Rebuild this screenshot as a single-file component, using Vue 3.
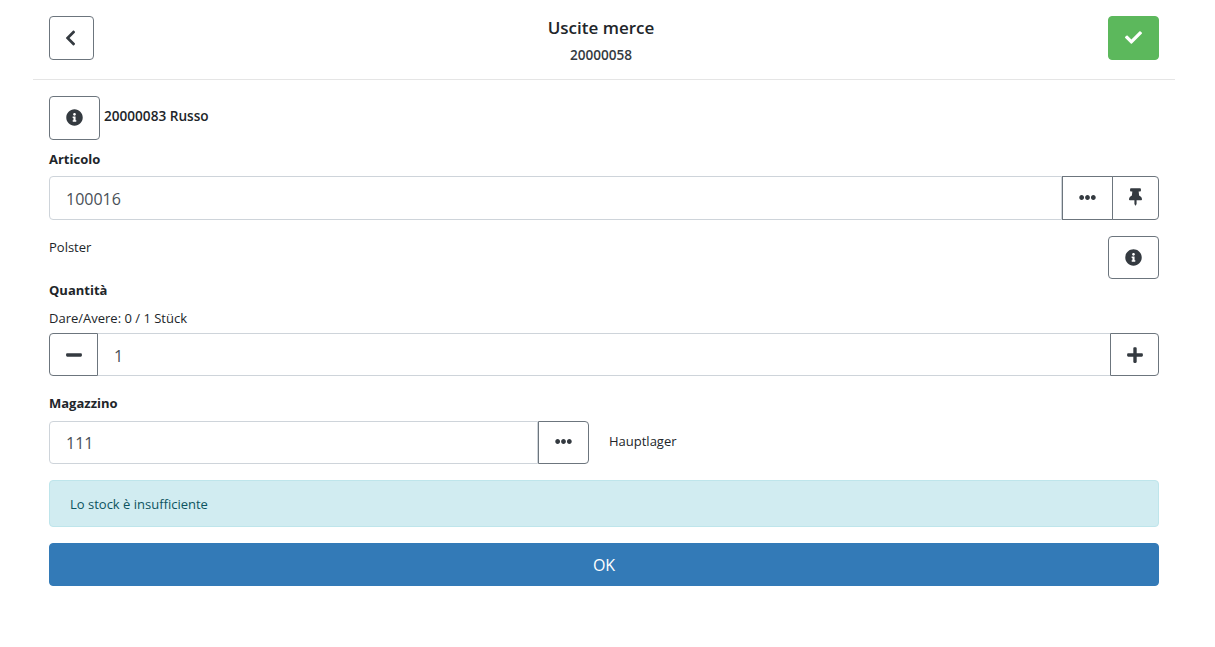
<script setup>
const info = 'M256 8C119.043 8 8 119.083 8 256c0 136.997 111.043 248 248 248s248-111.003 248-248C504 119.083 392.957 8 256 8zm0 110c23.196 0 42 18.804 42 42s-18.804 42-42 42-42-18.804-42-42 18.804-42 42-42zm56 254c0 6.627-5.373 12-12 12h-88c-6.627 0-12-5.373-12-12v-24c0-6.627 5.373-12 12-12h12v-64h-12c-6.627 0-12-5.373-12-12v-24c0-6.627 5.373-12 12-12h64c6.627 0 12 5.373 12 12v100h12c6.627 0 12 5.373 12 12v24z'
const dots = 'M328 256c0 39.8-32.2 72-72 72s-72-32.2-72-72 32.2-72 72-72 72 32.2 72 72zm104-72c-39.8 0-72 32.2-72 72s32.2 72 72 72 72-32.2 72-72-32.2-72-72-72zm-352 0c-39.8 0-72 32.2-72 72s32.2 72 72 72 72-32.2 72-72-32.2-72-72-72z'
</script>

<template>
  <div class="page">
    <header class="head">
      <button class="btn back">
        <svg class="ico chevron" width="11" height="18" viewBox="0 0 320 512"><path d="M34.52 239.03L228.87 44.69c9.37-9.37 24.57-9.37 33.94 0l22.67 22.67c9.36 9.36 9.37 24.52.04 33.9L131.49 256l154.02 154.75c9.34 9.38 9.32 24.54-.04 33.9l-22.67 22.67c-9.37 9.37-24.57 9.37-33.94 0L34.52 272.97c-9.37-9.37-9.37-24.57 0-33.94z"/></svg>
      </button>
      <div class="title">
        <h1>Uscite merce</h1>
        <div class="sub">20000058</div>
      </div>
      <button class="btn ok-top">
        <svg class="raise" width="17" height="17" viewBox="0 0 512 512"><path fill="#fff" d="M173.898 439.404l-166.4-166.4c-9.997-9.997-9.997-26.206 0-36.204l36.203-36.204c9.997-9.998 26.207-9.998 36.204 0L192 312.69 432.095 72.596c9.997-9.997 26.207-9.997 36.204 0l36.203 36.204c9.997 9.997 9.997 26.206 0 36.204l-294.4 294.401c-9.998 9.997-26.207 9.997-36.204-.001z"/></svg>
      </button>
    </header>

    <main class="body">
      <div class="customer">
        <button class="btn info-a">
          <svg class="ico raise" width="17" height="17" viewBox="0 0 512 512"><path :d="info"/></svg>
        </button>
        <span class="cust-text">20000083 Russo</span>
      </div>

      <label class="lbl art-lbl">Articolo</label>
      <div class="group art">
        <div class="field">100016</div>
        <button class="btn side mid">
          <svg class="ico raise" width="17" height="17" viewBox="0 0 512 512"><path :d="dots"/></svg>
        </button>
        <button class="btn side end pin">
          <svg class="ico raise" width="13" height="18" viewBox="0 0 384 512"><path d="M298.028 214.267L285.793 96H328c13.255 0 24-10.745 24-24V24c0-13.255-10.745-24-24-24H56C42.745 0 32 10.745 32 24v48c0 13.255 10.745 24 24 24h42.207L85.972 214.267C37.465 236.82 0 277.261 0 328c0 13.255 10.745 24 24 24h136v104.007c0 1.242.289 2.467.845 3.578l24 48c2.941 5.882 11.364 5.893 14.311 0l24-48a8.008 8.008 0 0 0 .845-3.578V352h136c13.255 0 24-10.745 24-24-.001-51.183-37.983-91.42-85.973-113.733z"/></svg>
        </button>
      </div>

      <div class="desc">
        <span class="small">Polster</span>
        <button class="btn info-b">
          <svg class="ico" width="17" height="17" viewBox="0 0 512 512"><path :d="info"/></svg>
        </button>
      </div>

      <label class="lbl qty-lbl">Quantità</label>
      <div class="small balance">Dare/Avere: 0 / 1 Stück</div>
      <div class="group qty">
        <button class="btn side start">
          <svg class="ico" width="16" height="18" viewBox="0 0 448 512"><path d="M416 208H32c-17.67 0-32 14.33-32 32v32c0 17.67 14.33 32 32 32h384c17.67 0 32-14.33 32-32v-32c0-17.67-14.33-32-32-32z"/></svg>
        </button>
        <div class="field">1</div>
        <button class="btn side end">
          <svg class="ico" width="16" height="18" viewBox="0 0 448 512"><path d="M416 208H272V64c0-17.67-14.33-32-32-32h-32c-17.67 0-32 14.33-32 32v144H32c-17.67 0-32 14.33-32 32v32c0 17.67 14.33 32 32 32h144v144c0 17.67 14.33 32 32 32h32c17.67 0 32-14.33 32-32V304h144c17.67 0 32-14.33 32-32v-32c0-17.67-14.33-32-32-32z"/></svg>
        </button>
      </div>

      <label class="lbl store-lbl">Magazzino</label>
      <div class="store">
        <div class="group store-group">
          <div class="field">111</div>
          <button class="btn side end">
            <svg class="ico raise" width="17" height="17" viewBox="0 0 512 512"><path :d="dots"/></svg>
          </button>
        </div>
        <span class="small store-name">Hauptlager</span>
      </div>

      <div class="alert">Lo stock è insufficiente</div>
      <button class="btn submit">OK</button>
    </main>
  </div>
</template>

<style scoped>
.page {
  width: 1142px;
  margin-left: 33px;
  font-family: "Open Sans", "Liberation Sans", sans-serif;
  color: #212529;
  font-size: 13px;
}
.ico { fill: #343a40; }
.raise { margin-bottom: 2px; }
.chevron { margin-right: 2px; margin-bottom: 1px; }
.btn {
  box-sizing: border-box;
  display: flex;
  align-items: center;
  justify-content: center;
  padding: 0;
  background: #fff;
  border: 1px solid #6c757d;
  border-radius: 4px;
  font-family: inherit;
  flex: none;
}
.head {
  box-sizing: border-box;
  height: 80px;
  padding: 16px;
  border-bottom: 1px solid #e5e5e5;
  display: flex;
  align-items: flex-start;
  justify-content: space-between;
}
.back { width: 45px; height: 44px; }
.ok-top { width: 51px; height: 44px; background: #5cb85c; border-color: #5cb85c; }
.title { text-align: center; margin-top: 1px; }
.title h1 {
  margin: 0;
  font-size: 17px;
  line-height: 22px;
  font-weight: 600;
  color: #212529;
}
.sub { font-size: 13.6px; font-weight: 600; line-height: 18px; margin-top: 7px; color: #343a40; }
.body { padding: 16px; }
.customer { display: flex; align-items: flex-start; gap: 4px; }
.info-a { width: 51px; height: 44px; }
.cust-text { font-size: 13.6px; font-weight: 600; line-height: 18px; margin-top: 11px; color: #212529; }
.lbl { display: block; font-size: 13px; font-weight: 700; line-height: 18px; color: #212529; }
.art-lbl { margin-top: 10px; }
.group { display: flex; box-sizing: border-box; }
.art { margin-top: 8px; height: 44px; }
.field {
  flex: 1;
  box-sizing: border-box;
  border: 1px solid #ced4da;
  display: flex;
  align-items: center;
  padding-left: 16px;
  font-size: 16px;
  color: #495057;
  background: #fff;
  min-width: 0;
}
.art .field, .qty .field { padding-top: 2px; }
.art .field, .store-group .field { border-radius: 4px 0 0 4px; }
.side { height: 100%; width: 51px; border-radius: 0; }
.mid { width: 51px; }
.pin { margin-left: -1px; width: 47px; }
.end { border-radius: 0 4px 4px 0; }
.start { border-radius: 4px 0 0 4px; width: 49px; border-right: 1px solid #6c757d; }
.desc {
  display: flex;
  justify-content: space-between;
  align-items: flex-start;
  margin-top: 16px;
}
.small { font-size: 13px; line-height: 18px; color: #212529; }
.desc .small { margin-top: 2px; }
.info-b { width: 51px; height: 43px; }
.qty-lbl { margin-top: 2px; }
.balance { margin-top: 10px; }
.qty { margin-top: 6px; height: 43px; }
.qty .field { border-left: none; border-right: none; }
.qty .end { width: 49px; }
.store-lbl { margin-top: 18px; }
.store { display: flex; align-items: flex-start; margin-top: 9px; }
.store-group { width: 540px; height: 43px; }
.store-name { margin-left: 20px; margin-top: 11px; }
.alert {
  box-sizing: border-box;
  height: 47px;
  margin-top: 16px;
  padding: 0 20px;
  display: flex;
  align-items: center;
  background: #d1ecf1;
  border: 1px solid #bee5eb;
  border-radius: 4px;
  color: #0c5460;
  font-size: 13px;
}
.submit {
  width: 100%;
  height: 43px;
  margin-top: 16px;
  background: #337ab7;
  border-color: #337ab7;
  color: #fff;
  font-size: 16px;
}
</style>
